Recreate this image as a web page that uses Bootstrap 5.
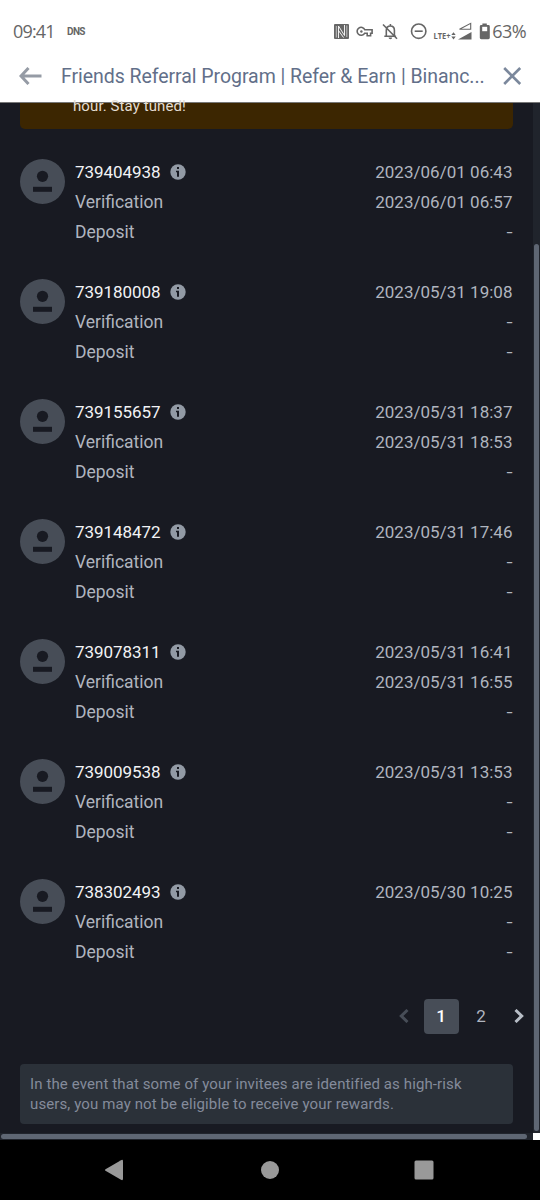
<!DOCTYPE html>
<html lang="en">
<head>
<meta charset="utf-8">
<meta name="viewport" content="width=device-width, initial-scale=1">
<title>Friends Referral Program</title>
<link href="https://cdn.jsdelivr.net/npm/bootstrap@5.3.0/dist/css/bootstrap.min.css" rel="stylesheet">
<style>
body{width:540px;height:1200px;overflow:hidden;background:#181a22;font-family:Roboto,"Noto Sans",sans-serif;color:#b0b5bf}
svg{display:block;flex:none}
.status{height:50px;padding:12px 14px 0 13px;color:#666;background:#fff}
.clock{font-family:"Open Sans","Noto Sans",sans-serif;font-size:18px;line-height:38px;letter-spacing:-.85px;width:54px}
.dns{font-family:Roboto,sans-serif;font-weight:700;font-size:10px;letter-spacing:-.6px;line-height:39px}
.pct{font-family:"Open Sans","Noto Sans",sans-serif;font-size:18px;line-height:38px;letter-spacing:-.6px}
.titlebar{height:52.5px;background:#fff;border-bottom:1px solid #777;padding:0 18px 0 19px;color:#626f89}
.title{font-size:19.5px;width:426px;margin-left:19px;letter-spacing:-.05px;line-height:50px;padding-top:3px}
.view{height:1037.5px;display:grid;grid-template:1030px 7.5px / 533px 7px}
.page-area{padding:0 20.5px 0 20px}
.alert-bar{height:26.5px;margin-bottom:27.5px;background:#3c2601;border-radius:0 0 5px 5px;color:#e3ddd3;font-size:15px;letter-spacing:.1px;line-height:7px;padding-left:53px}
.person{height:90px;margin-bottom:30px;gap:10px}
.avatar{margin-top:2.5px}
.line{height:30px;line-height:30px;font-size:17px}
.lbl{font-size:17.5px}
.uid{color:#f2f3f5;letter-spacing:-.05px}
.info{margin-left:9.3px}
.date{letter-spacing:.02px}
.dash{display:inline-block;transform:scaleX(1.3);transform-origin:right}
.pager{height:35px;margin:32px -21px 30px 0;gap:5px;font-size:17px}
.pager .cell{width:35px;height:35px;border-radius:4px;padding-top:2px}
.pager .edge{width:30px;height:35px}
.pager .on{background:#474d57;color:#fff;font-weight:500}
.risk{height:60px;padding:10px;background:#2b3139;border-radius:4px;color:#848b9b;font-size:15px;line-height:20px;letter-spacing:.11px}
.vtrack{background:#20242c;padding:141.5px 1px 2px 1px}
.htrack{background:#20242c;padding:1.5px 6px 1px 1px}
.thumb{background:#5e6673;border-radius:3px;height:100%}
.sysnav{height:60px;background:#000;padding:0 106px 0 104px}
</style>
</head>
<body>
<header>
  <div class="status d-flex align-items-start">
    <span class="clock">09:41</span><span class="dns">DNS</span>
    <div class="ms-auto d-flex">
      <svg width="156" height="38" viewBox="334 12 156 38" fill="none" stroke="#666" stroke-width="1.6">
        <rect x="334" y="24" width="15" height="15" rx="1" fill="#666" stroke="none"/>
        <path d="M336.300 26v11.500M346.800 25.500v11.500" stroke="#fff" stroke-width=".6"/><path d="M338.500 38v-12l6 9.500v-10.500M338.500 30.500l5 7" stroke="#fff" stroke-width=".9"/>
        <path d="M364.800 29.700h7.300v3.600h-1.500v2.500h-3.400v-2.500h-2.600a4 4 0 1 1 .2-3.600z"/><circle cx="361.400" cy="31.500" r="1.200" fill="#666" stroke="none"/>
        <path d="M386.300 35.500v-5.200c0-2.700 1.600-4.300 4.100-4.300s4 1.800 4 4.300v5.200M384.300 36.300h11.800M390.400 24v2.500M383 24.500l14 14.200"/><path d="M388.600 37.500h3.600a1.800 1.800 0 0 1-3.600 0z" fill="#666" stroke="none"/>
        <circle cx="418.700" cy="31.200" r="7.200"/><path d="M414.700 31.200h8"/>
        <text x="433.500" y="38.700" fill="#666" stroke="none" font-family="Open Sans, sans-serif" font-size="8.500" font-weight="700" textLength="17" lengthAdjust="spacingAndGlyphs">LTE+</text>
        <path d="M451.300 35l2.200-2.800 2.200 2.800zM451.300 36.600l2.200 2.800 2.200-2.800z" fill="#666" stroke="none"/>
        <path d="M459.500 29.300l11.200-6v6z" stroke-width="1.100"/><path d="M458 39.500l13.500-7.500v7.500z" fill="#666" stroke="none"/>
        <path d="M482.400 23.400h4.400v1.600h1.600q1.400 0 1.400 1.400v11.400q0 1.400-1.400 1.400h-7.200q-1.400 0-1.400-1.400V26.400q0-1.400 1.400-1.400h1.200z" fill="#666" stroke="none"/><path d="M482.200 31.200v-4.400h5v4.400z" fill="#fff" stroke="none"/>
      </svg>
      <span class="pct" style="margin-left:2px">63%</span>
    </div>
  </div>
  <div class="titlebar d-flex align-items-center">
    <svg width="23" height="18" viewBox="0 0 23 18" fill="none" stroke="#959ba5" stroke-width="3"><path d="M22.500 9H2.500M9.500 1L2 9l7.500 8"/></svg>
    <div class="title text-nowrap">Friends Referral Program | Refer &amp; Earn | Binanc...</div>
    <svg class="ms-auto" width="19" height="18" viewBox="0 0 19 18" fill="none" stroke="#7b889c" stroke-width="2.600"><path d="M1.200 1l16 16M17.200 1l-16 16"/></svg>
  </div>
</header>
<main class="view">
  <section class="page-area">
    <div class="alert-bar">hour. Stay tuned!</div>
    <div id="people"></div>
    <nav class="pager d-flex justify-content-end">
      <span class="edge d-flex align-items-center justify-content-center"><svg width="10" height="14" viewBox="0 0 10 14" fill="none" stroke="#474d57" stroke-width="3"><path d="M8.500 1L2.300 7l6.200 6"/></svg></span>
      <span class="cell on d-flex align-items-center justify-content-center">1</span>
      <span class="cell d-flex align-items-center justify-content-center">2</span>
      <span class="edge d-flex align-items-center justify-content-center"><svg width="10" height="14" viewBox="0 0 10 14" fill="none" stroke="#b7bdc6" stroke-width="3"><path d="M1.500 1l6.200 6-6.200 6"/></svg></span>
    </nav>
    <div class="risk"><div class="text-nowrap">In the event that some of your invitees are identified as high-risk</div><div class="text-nowrap">users, you may not be eligible to receive your rewards.</div></div>
  </section>
  <div class="vtrack"><div class="thumb"></div></div>
  <div class="htrack"><div class="thumb"></div></div>
  <div class="bg-white"></div>
</main>
<footer class="sysnav d-flex align-items-center justify-content-between">
  <svg width="20" height="22" viewBox="0 0 20 22" fill="#999"><path d="M1.500 10.200L17 1.200q2-1 2 1v17.600q0 2-2 1L1.500 11.800q-1.300-.8 0-1.600z"/></svg>
  <svg width="20" height="18" viewBox="-1 0 20 18" fill="#999"><circle cx="10" cy="9" r="9"/></svg>
  <svg width="20" height="20" viewBox="0 0 20 20" fill="#999"><rect x=".5" y=".5" width="19" height="19" rx="1.500"/></svg>
</footer>
<script src="https://cdn.jsdelivr.net/npm/bootstrap@5.3.0/dist/js/bootstrap.bundle.min.js"></script>
<script>
const people=[
 ["739404938","2023/06/01 06:43","2023/06/01 06:57"],
 ["739180008","2023/05/31 19:08","-"],
 ["739155657","2023/05/31 18:37","2023/05/31 18:53"],
 ["739148472","2023/05/31 17:46","-"],
 ["739078311","2023/05/31 16:41","2023/05/31 16:55"],
 ["739009538","2023/05/31 13:53","-"],
 ["738302493","2023/05/30 10:25","-"]];
const stamp=v=>`<span class="date${v==="-"?" dash":""}">${v}</span>`;
document.getElementById("people").innerHTML=people.map(([id,joined,verified])=>`
<article class="person d-flex">
  <svg class="avatar" width="45" height="45" viewBox="0 0 45 45"><circle cx="22.500" cy="22.500" r="22.500" fill="#474d57"/><circle cx="22.500" cy="17.300" r="5.600" fill="#181a22"/><path d="M13 27.800h19v5H13z" fill="#181a22"/></svg>
  <div class="flex-grow-1">
    <div class="line d-flex justify-content-between"><div class="d-flex align-items-center"><span class="uid">${id}</span><svg class="info" width="16" height="16" viewBox="0 0 16 16"><circle cx="8" cy="8" r="7.700" fill="#929aa5"/><path d="M7 3h2v2.100H7zM6 6.700h3v6H7V8.200H6z" fill="#181a22"/></svg></div>${stamp(joined)}</div>
    <div class="line d-flex justify-content-between"><span class="lbl">Verification</span>${stamp(verified)}</div>
    <div class="line d-flex justify-content-between"><span class="lbl">Deposit</span>${stamp("-")}</div>
  </div>
</article>`).join("");
</script>
</body>
</html>
